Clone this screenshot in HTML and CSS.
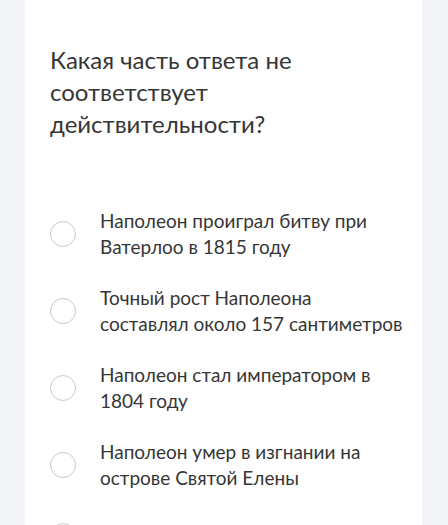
FILE: index.html
```html
<!DOCTYPE html>
<html>
<head>
  <meta charset="UTF-8">
  <meta name="viewport" content="width=device-width, initial-scale=1">
  <title>Вопрос</title>
  <link rel="stylesheet" href="styles.css">
</head>
<body>
  <div class="card">
    <h2 class="question">Какая часть ответа не соответствует действительности?</h2>

    <ul class="answers">
      <li class="answer">
        <span class="radio"></span>
        <span class="answer-text">Наполеон проиграл битву при Ватерлоо в 1815 году</span>
      </li>
      <li class="answer">
        <span class="radio"></span>
        <span class="answer-text">Точный рост Наполеона<br>составлял около 157 сантиметров</span>
      </li>
      <li class="answer">
        <span class="radio"></span>
        <span class="answer-text">Наполеон стал императором в 1804 году</span>
      </li>
      <li class="answer">
        <span class="radio"></span>
        <span class="answer-text">Наполеон умер в изгнании на острове Святой Елены</span>
      </li>
      <!-- next option, only its radio shows above the fold -->
      <li class="answer answer-next">
        <span class="radio"></span>
      </li>
    </ul>
  </div>
</body>
</html>
```

FILE: styles.css
```css
/* Page */
html, body {
  margin: 0;
  padding: 0;
  background-color: #f3f5f9;
  color: #363636;
  font-family: Lato, 'Noto Sans', sans-serif;
  overflow: hidden;
}
.card {
  width: 397px;
  margin: 0 0 0 25px;
  padding: 44px 8px 40px 25px;
  box-sizing: border-box;
  background-color: #ffffff;
}
.question {
  margin: 0;
  width: 260px;
  font-size: 24px;
  font-weight: 400;
  line-height: 32px;
  color: #363636;
}
/* Answer list */
.answers {
  list-style: none;
  margin: 68px 0 0 0;
  padding: 0;
}
.answer {
  display: flex;
  align-items: center;
  margin-bottom: 25px;
}
.answer-next {
  padding-top: 7px;
}
.radio {
  flex: none;
  width: 24px;
  height: 24px;
  border: 1.5px solid #c9c9c9;
  border-radius: 50%;
  margin-right: 24px;
}
.answer-text {
  font-size: 19px;
  line-height: 26px;
  color: #363636;
  max-width: 306px;
}
```
